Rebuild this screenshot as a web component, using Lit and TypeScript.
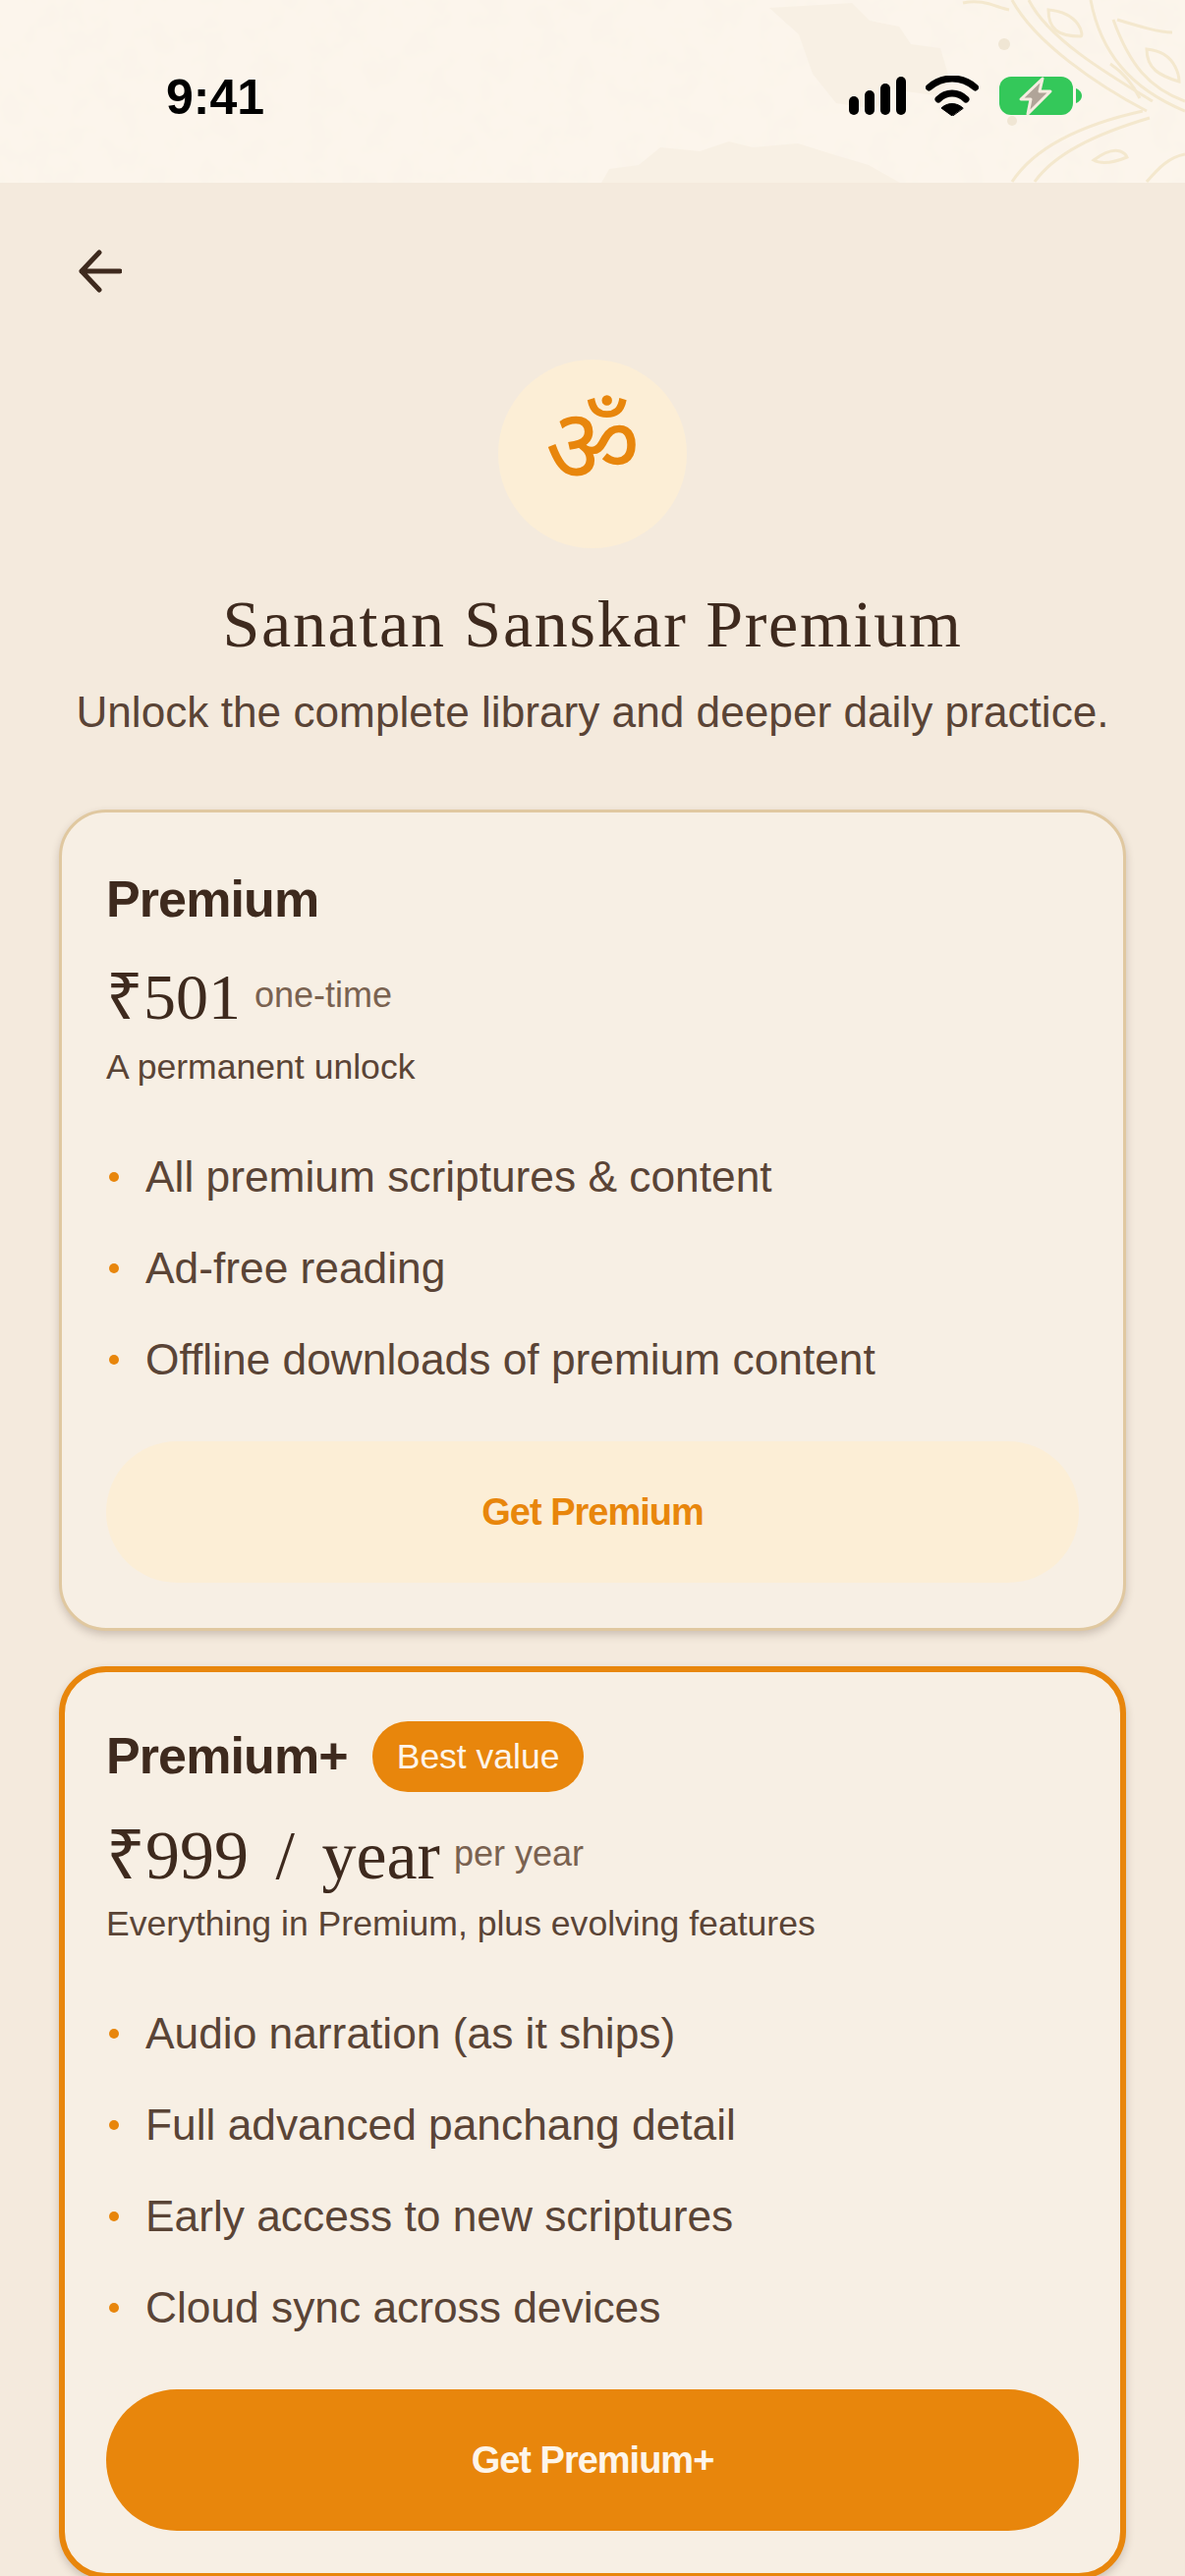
import { LitElement, css, html, svg } from 'lit';
import { customElement } from 'lit/decorators.js';

const premiumFeatures = [
  'All premium scriptures & content',
  'Ad-free reading',
  'Offline downloads of premium content',
];

const plusFeatures = [
  'Audio narration (as it ships)',
  'Full advanced panchang detail',
  'Early access to new scriptures',
  'Cloud sync across devices',
];

@customElement('app-root')
export class AppRoot extends LitElement {
  static styles = css`
    :host {
      display: block;
      width: 1206px;
      height: 2622px;
      overflow: hidden;
      background: #f4eadd;
      color: #3e2a1e;
      font-family: 'Liberation Sans', Arial, sans-serif;
    }

    .status {
      position: relative;
      height: 186px;
      background: #fcf5ec;
      overflow: hidden;
    }
    .status-bg {
      position: absolute;
      inset: 0;
    }
    .status-row {
      position: relative;
      display: flex;
      align-items: center;
      justify-content: space-between;
      padding: 73px 105px 0 169px;
    }
    .time {
      font-size: 50px;
      line-height: 52px;
      font-weight: 700;
      color: #000;
    }
    .status-icons {
      display: flex;
      align-items: center;
      gap: 20px;
      margin-top: -3px;
    }
    .battery {
      margin-left: 1px;
    }

    .page {
      display: flex;
      flex-direction: column;
      align-items: stretch;
      padding: 0 60px;
    }
    .back {
      display: block;
      margin: 68px 0 0 20px;
      height: 44px;
    }
    .hero {
      display: flex;
      flex-direction: column;
      align-items: center;
    }
    .om-disc {
      box-sizing: border-box;
      margin-top: 68px;
      width: 192px;
      height: 192px;
      padding-bottom: 24px;
      border-radius: 50%;
      background: #fceed6;
      color: #e8860c;
      display: flex;
      align-items: center;
      justify-content: center;
      font-family: 'Noto Sans', 'DejaVu Sans', sans-serif;
      font-size: 106px;
      line-height: 1;
    }
    h1 {
      margin: 39px 0 0;
      font-family: 'Liberation Serif', serif;
      font-weight: 400;
      font-size: 68px;
      line-height: 76px;
      letter-spacing: 1.7px;
      white-space: nowrap;
    }
    .lede {
      margin: 25px 0 0;
      font-size: 44.2px;
      line-height: 54px;
      color: #5a4436;
      white-space: nowrap;
    }

    .card {
      box-sizing: border-box;
      background: #f7efe4;
      border-radius: 48px;
      border: 3px solid #e0c8a0;
      box-shadow: 0 4px 8px rgba(62, 42, 30, 0.22);
      padding: 52px 45px 0;
    }
    .card.basic {
      margin-top: 72px;
      height: 836px;
    }
    .card.plus {
      margin-top: 36px;
      height: 929px;
      border: 6px solid #e8860c;
      padding: 49px 42px 0;
    }

    .name-row {
      display: flex;
      align-items: center;
      gap: 25px;
      height: 72px;
    }
    .name {
      font-size: 52px;
      line-height: 72px;
      font-weight: 700;
      letter-spacing: -0.9px;
    }
    .badge {
      margin-top: 2px;
      background: #e8860c;
      color: #fdf5ea;
      font-size: 35.5px;
      line-height: 72px;
      padding: 0 25px;
      border-radius: 36px;
    }
    .price-row {
      display: flex;
      align-items: flex-end;
      gap: 14px;
      margin-top: 26px;
    }
    .plus .price-row {
      margin-top: 28px;
    }
    .price {
      font-family: 'Liberation Serif', serif;
      font-size: 66px;
      line-height: 76px;
    }
    .plus .price {
      font-size: 70px;
      word-spacing: 10px;
    }
    .per {
      font-size: 36px;
      line-height: 36px;
      margin-bottom: 22px;
      color: #7a6250;
    }
    .note {
      margin: 11px 0 0;
      font-size: 35.6px;
      line-height: 44px;
      color: #5a4436;
    }
    .plus .note {
      margin-top: 9px;
    }
    ul {
      list-style: none;
      margin: 43px 0 0;
      padding: 0;
    }
    li {
      display: flex;
      align-items: center;
      height: 93px;
      font-size: 44.3px;
      color: #5a4436;
    }
    li::before {
      content: '';
      width: 10px;
      height: 10px;
      border-radius: 50%;
      background: #e8860c;
      margin: 0 27px 0 3px;
    }
    .cta {
      display: flex;
      align-items: center;
      justify-content: center;
      height: 144px;
      margin-top: 37px;
      border-radius: 72px;
      background: #fceed6;
      color: #e8860c;
      font-size: 38px;
      font-weight: 700;
      letter-spacing: -1px;
    }
    .plus .cta {
      background: #e8860c;
      color: #fdf5ea;
    }
  `;

  // parchment watermark behind the status bar
  renderParchment() {
    return svg`
      <svg class="status-bg" width="1206" height="186" viewBox="0 0 1206 186" fill="none">
        <filter id="grain">
          <feTurbulence type="fractalNoise" baseFrequency="0.035" numOctaves="3" seed="4" />
          <feColorMatrix values="0 0 0 0 0.93  0 0 0 0 0.88  0 0 0 0 0.78  0 0 0 0.5 -0.18" />
        </filter>
        <rect width="1206" height="186" filter="url(#grain)" />
        <path d="M783 8l84-5 18 18 30 6 12 18 30 4 10 34-16 14-44-6-16 20-40-6-24-30-14-40z" fill="#f8f0e4" />
        <path d="M612 186l8-14 30-4 22-18 40 4 30-10 24 6 46-4 32 10 40 12 32 18z" fill="#f8f0e4" />
        <g stroke="#f4e8ce" stroke-width="3">
          <path d="M1030 0C1053 43 1117 87 1167 113" />
          <path d="M1047 0C1067 40 1130 77 1173 103" />
          <path d="M1030 185C1053 150 1100 127 1163 113" />
          <path d="M1053 185C1073 157 1113 137 1170 120" />
          <path d="M1110 0C1120 53 1150 90 1206 113" />
          <path d="M1133 20C1150 67 1170 90 1206 103" />
          <path d="M1167 185C1180 170 1190 160 1206 157" />
          <path d="M980 3C1000 -2 1015 8 1027 10" />
          <path d="M1067 10C1100 13 1103 37 1100 37C1077 37 1067 30 1067 10z" />
          <path d="M1167 50C1200 53 1200 83 1200 83C1180 77 1167 70 1167 50z" />
          <path d="M1137 20C1160 27 1180 33 1193 33" />
          <path d="M1113 163C1140 143 1147 160 1147 160C1130 167 1120 167 1113 163z" />
          <path d="M1130 65C1145 75 1155 90 1160 100" />
        </g>
        <circle cx="1022" cy="45" r="6" fill="#f0e6d4" />
        <circle cx="1030" cy="123" r="5" fill="#f0e6d4" />
      </svg>
    `;
  }

  renderCard(cls: string, name: string, price: string, per: string, note: string, items: string[], cta: string, badge?: string) {
    return html`
      <section class="card ${cls}">
        <div class="name-row">
          <span class="name">${name}</span>
          ${badge ? html`<span class="badge">${badge}</span>` : ''}
        </div>
        <div class="price-row">
          <span class="price">${price}</span>
          <span class="per">${per}</span>
        </div>
        <p class="note">${note}</p>
        <ul>${items.map((t) => html`<li>${t}</li>`)}</ul>
        <div class="cta">${cta}</div>
      </section>
    `;
  }

  render() {
    return html`
      <div class="status">
        ${this.renderParchment()}
        <div class="status-row">
          <span class="time">9:41</span>
          <div class="status-icons">
            <svg width="58" height="39" viewBox="0 0 58 39" fill="#000">
              <rect x="0" y="20" width="10" height="19" rx="5" />
              <rect x="16" y="14" width="10" height="25" rx="5" />
              <rect x="32" y="7" width="10" height="32" rx="5" />
              <rect x="48" y="0" width="10" height="39" rx="5" />
            </svg>
            <svg width="54" height="41" viewBox="0 0 54 41" fill="none" stroke="#000" stroke-linecap="round">
              <path d="M3.5 12C17 0 37 0 50.5 12" stroke-width="7" />
              <path d="M13 24C21 16 33 16 41 24" stroke-width="7" />
              <path d="M27 41L16 33c6-6 16-6 22 0z" fill="#000" stroke="#000" stroke-width="1" stroke-linejoin="round" />
            </svg>
            <svg class="battery" width="84" height="41" viewBox="0 0 84 41">
              <rect x="0" y="1" width="75" height="39" rx="12" fill="#34c85a" />
              <path d="M78 13c3 1 6 4 6 7.500s-3 6.500-6 7.500z" fill="#34c85a" />
              <path d="M44 3L22 24h10l-3 15 23-23H41z" fill="#b0a498" stroke="#f5ece0" stroke-width="3" stroke-linejoin="round" />
            </svg>
          </div>
        </div>
      </div>
      <div class="page">
        <svg class="back" width="44" height="44" viewBox="0 0 44 44" fill="none" stroke="#3e2a1e" stroke-width="5" stroke-linecap="round" stroke-linejoin="round">
          <path d="M42 22H3M21 3L3 22l18 19" />
        </svg>
        <div class="hero">
          <div class="om-disc">ॐ</div>
          <h1>Sanatan Sanskar Premium</h1>
          <p class="lede">Unlock the complete library and deeper daily practice.</p>
        </div>
        ${this.renderCard('basic', 'Premium', '₹501', 'one-time', 'A permanent unlock', premiumFeatures, 'Get Premium')}
        ${this.renderCard('plus', 'Premium+', '₹999 / year', 'per year', 'Everything in Premium, plus evolving features', plusFeatures, 'Get Premium+', 'Best value')}
      </div>
    `;
  }
}
